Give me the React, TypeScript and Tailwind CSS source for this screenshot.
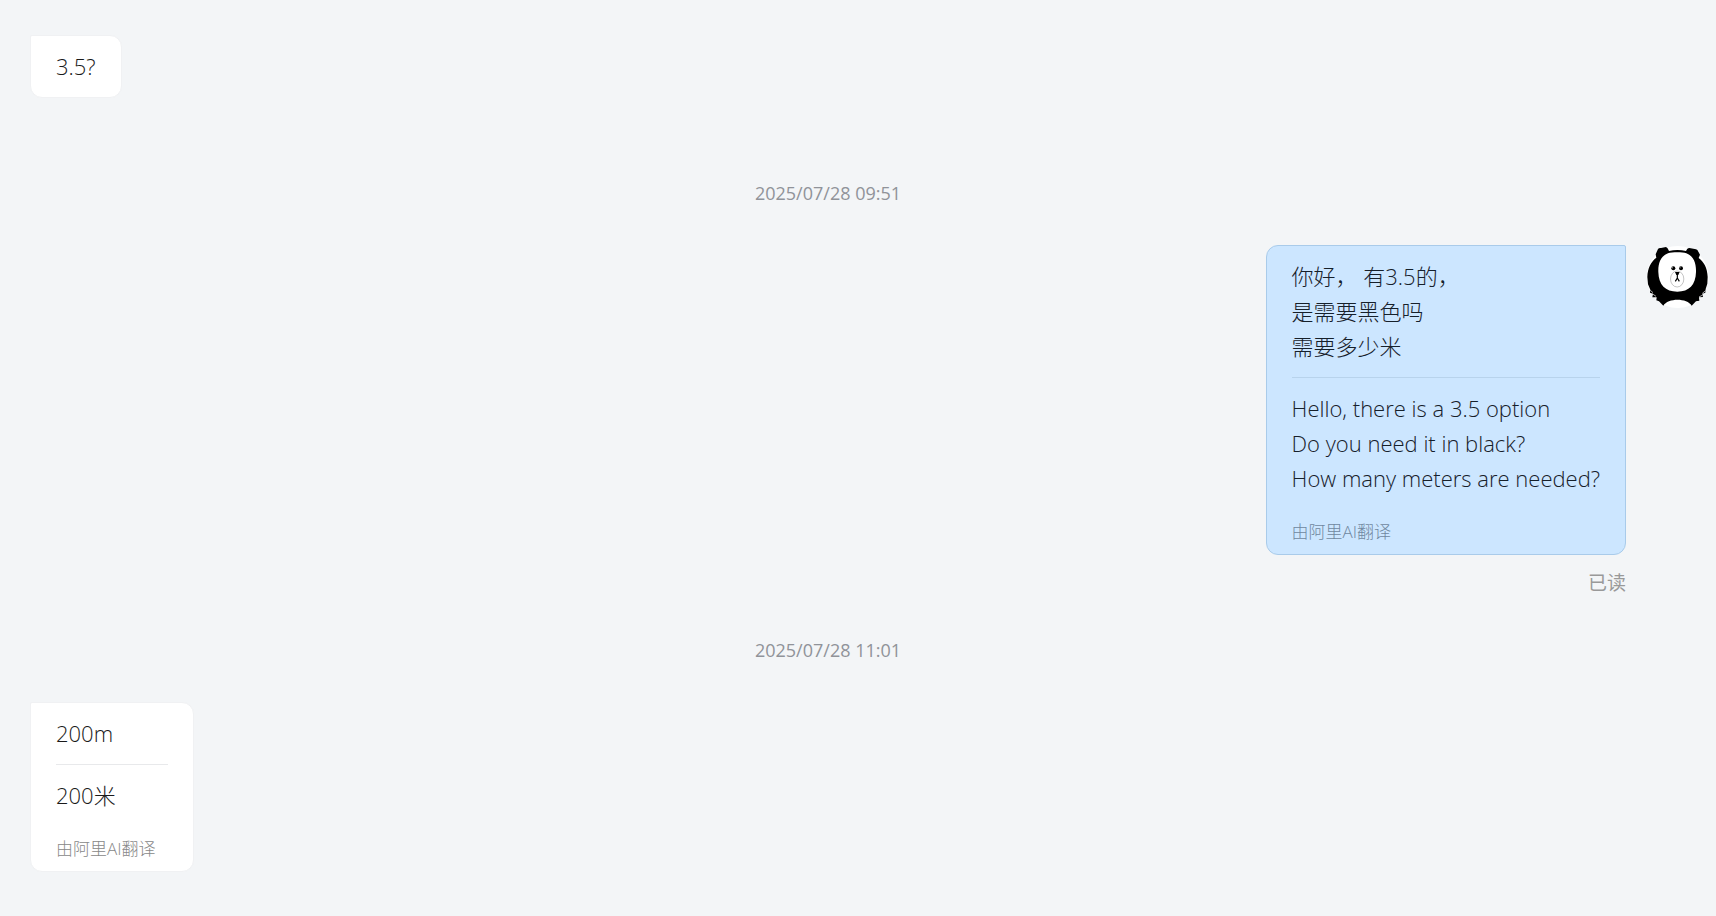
import type { ReactNode } from 'react';
import clsx from 'clsx';

type Message = {
  id: number;
  time?: string;
  mine?: boolean;
  original: string[];
  translated?: string[];
  read?: boolean;
};

const messages: Message[] = [
  { id: 1, original: ['3.5?'] },
  {
    id: 2,
    time: '2025/07/28 09:51',
    mine: true,
    original: ['你好， 有3.5的，', '是需要黑色吗', '需要多少米'],
    translated: ['Hello, there is a 3.5 option', 'Do you need it in black?', 'How many meters are needed?'],
    read: true,
  },
  { id: 3, time: '2025/07/28 11:01', original: ['200m'], translated: ['200米'] },
];

function PandaAvatar() {
  return (
    <svg viewBox="78 44 189 189" className="h-[63px] w-[63px]" role="img" aria-label="Avatar">
      <circle cx="173" cy="140" r="93" fill="#fff" />
      {/* body and head */}
      <path
        d="M82 140C83 112 93 94 109 82L107 72L114 56Q117 52 123 53L138 50Q143 51 147 62C163 58 182 58 198 62Q202 52 208 53L228 57Q233 58 235 64L240 73L236 83C251 94 262 112 263 140L262 160L257 176L256 187L247 190L249 200L237 201L238 211L228 213L215 226C202 202 143 202 130 226L117 213L109 210L110 201L97 201L99 190L90 187L91 178L84 162Z"
        fill="#000"
      />
      {/* face */}
      <path
        d="M144 69C157 65 187 65 199 69C221 77 229 98 228 125C227 164 207 184 172 184C136 184 116 164 115 125C114 98 122 77 144 69Z"
        fill="#fff"
      />
      <ellipse cx="171.500" cy="146" rx="20" ry="24" fill="#fff" stroke="#888" strokeWidth="1.500" />
      <circle cx="160" cy="114" r="6" fill="#000" />
      <circle cx="183" cy="114" r="6" fill="#000" />
      <circle cx="157" cy="112" r="1.500" fill="#fff" />
      <circle cx="180" cy="112" r="1.500" fill="#fff" />
      <path d="M165 125H179L175 134H169Z" fill="#000" />
      <path d="M172 132V143L166 153M172 143L178 153" fill="none" stroke="#000" strokeWidth="3.500" />
      {/* fur */}
      <path d="M91 180L99 187M98 191L108 198M247 189L257 181M237 200L248 194" stroke="#fff" strokeWidth="2" />
    </svg>
  );
}

function Bubble({ mine, children }: { mine?: boolean; children: ReactNode }) {
  return (
    <div
      className={clsx(
        'rounded-xl border px-[25px] pt-[13px] text-[22px] leading-[35px] font-light',
        mine
          ? 'rounded-tr-[2px] border-[#a9cbea] bg-[#cce6ff] text-[#16202a]'
          : 'rounded-tl-[2px] border-[#f0f1f3] bg-white text-[#1a1a1a]',
      )}
    >
      {children}
    </div>
  );
}

function MessageRow({ message }: { message: Message }) {
  const { mine, original, translated, read } = message;

  return (
    <div className="flex gap-5">
      <div className={clsx('flex min-w-0 flex-1 flex-col', mine ? 'items-end' : 'items-start')}>
        <Bubble mine={mine}>
          <div className="pb-[13px]">
            {original.map((line) => (
              <p key={line}>{line}</p>
            ))}
          </div>
          {translated && (
            <>
              <div className={clsx('border-t pt-[13px]', mine ? 'border-[#b8d3ec]' : 'border-[#e8e9eb]')}>
                {translated.map((line) => (
                  <p key={line}>{line}</p>
                ))}
              </div>
              <p className={clsx('mt-[22px] pr-3 pb-2 text-[17px] leading-7', mine ? 'text-[#7088a0]' : 'text-[#888]')}>
                由阿里AI翻译
              </p>
            </>
          )}
        </Bubble>
        {read && <span className="mt-[14px] text-[19px] leading-7 text-[#999]">已读</span>}
      </div>
      {/* gutter stays reserved on incoming rows so timestamps and bubbles line up */}
      <div className="w-[62px] shrink-0">{mine && <PandaAvatar />}</div>
    </div>
  );
}

export default function App() {
  return (
    <main
      lang="zh-CN"
      className="min-h-screen bg-[#f3f5f7] pt-[35px] pr-2 pb-11 pl-[30px] font-['Open_Sans','Noto_Sans_CJK_SC',sans-serif]"
    >
      {messages.map((message) => (
        <section key={message.id}>
          {message.time && (
            <time
              className={clsx(
                'mr-[82px] mb-10 block text-center text-[18px] leading-6 text-[#909399]',
                message.id === 2 ? 'mt-[83px]' : 'mt-[41px]',
              )}
            >
              {message.time}
            </time>
          )}
          <MessageRow message={message} />
        </section>
      ))}
    </main>
  );
}
